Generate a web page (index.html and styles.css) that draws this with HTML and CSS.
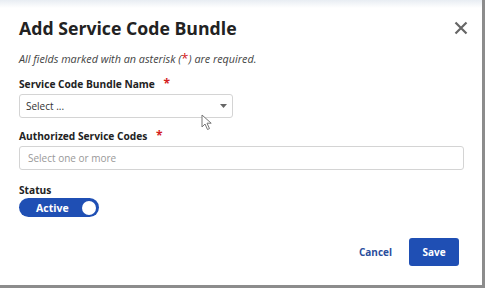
FILE: index.html
```html
<!DOCTYPE html>
<html lang="en">
<head>
    <meta charset="UTF-8">
    <meta name="viewport" content="width=device-width, initial-scale=1.0">
    <title>Add Service Code Bundle</title>
    <link rel="stylesheet" href="styles.css">
</head>
<body>
    <div class="modal">
        <div class="modal-header">
            <h1>Add Service Code Bundle</h1>
            <button class="close" aria-label="Close">
                <svg width="14" height="14" viewBox="0 0 14 14"><path d="M1.5 1.5 L12.5 12.5 M12.5 1.5 L1.5 12.5" stroke="#666" stroke-width="2.2" fill="none"/></svg>
            </button>
        </div>

        <p class="note">All fields marked with an asterisk (<span class="req">*</span>) are required.</p>

        <div class="field">
            <label>Service Code Bundle Name <span class="req">*</span></label>
            <div class="select short">
                <span>Select ...</span>
                <svg class="caret" width="7" height="4" viewBox="0 0 7 4"><path d="M0 0 H7 L3.5 4 Z" fill="#666"/></svg>
                <svg class="cursor" width="12" height="17" viewBox="0 0 12 17"><path d="M1 1 L1 13 L4 10 L6.5 15.5 L8.5 14.6 L6 9.2 L10.2 9.2 Z" fill="#fff" stroke="#777" stroke-width="1"/></svg>
            </div>
        </div>

        <div class="field">
            <label>Authorized Service Codes <span class="req">*</span></label>
            <div class="select">
                <span class="placeholder">Select one or more</span>
            </div>
        </div>

        <div class="field status">
            <label>Status</label>
            <div class="toggle">
                <span>Active</span>
                <span class="knob"></span>
            </div>
        </div>

        <div class="actions">
            <button class="link">Cancel</button>
            <button class="primary">Save</button>
        </div>
    </div>
</body>
</html>
```

FILE: styles.css
```css
body {
    margin: 0;
    background: #8c8c8c;
    font-family: "Open Sans", sans-serif;
    color: #222;
    width: 485px;
    height: 288px;
    overflow: hidden;
}

.modal {
    width: 482px;
    height: 285px;
    box-sizing: border-box;
    padding: 14px 18px 0 19px;
    background: linear-gradient(#e8edf3 0px, #fff 8px);
}

.modal-header {
    display: flex;
    justify-content: space-between;
    align-items: center;
}

h1 {
    margin: 0;
    font-size: 17.7px;
    font-weight: 700;
    color: #222;
    line-height: 28px;
}

.close {
    background: none;
    border: none;
    padding: 0;
    margin-right: -4px;
    display: flex;
}

.note {
    margin: 9px 0 11px;
    font-size: 10.8px;
    font-style: italic;
    color: #444;
}

.note .req {
    font-size: 13px;
    line-height: 10px;
    font-style: normal;
}

.req {
    color: #d32020;
}

.field {
    margin-bottom: 11px;
}

.field.status {
    padding-top: 2px;
}

.field.status label {
    margin-bottom: 0;
}

label {
    display: block;
    font-size: 10.2px;
    line-height: 15px;
    font-weight: 700;
    color: #222;
    margin-bottom: 2px;
}

label .req {
    margin-left: 6px;
    font-size: 12px;
    line-height: 10px;
}

.select {
    height: 24px;
    border: 1px solid #d4d4d4;
    border-radius: 3px;
    box-sizing: border-box;
    display: flex;
    align-items: center;
    justify-content: space-between;
    padding: 0 5px 0 6px;
    font-size: 10px;
    color: #333;
    position: relative;
}

.select.short {
    width: 214px;
}

.placeholder {
    color: #999;
    padding-left: 2px;
}

.cursor {
    position: absolute;
    left: 181px;
    top: 19px;
}

.toggle {
    width: 80px;
    height: 19px;
    border-radius: 10px;
    background: #1f4fb4;
    color: #fff;
    font-size: 10.5px;
    font-weight: 700;
    display: flex;
    align-items: center;
    justify-content: space-between;
    padding: 0 3px 0 17px;
    box-sizing: border-box;
}

.knob {
    width: 14px;
    height: 14px;
    border-radius: 50%;
    background: #fff;
}

.actions {
    display: flex;
    justify-content: flex-end;
    align-items: center;
    gap: 17px;
    margin-top: 21px;
    margin-right: 5px;
}

button {
    font-family: inherit;
    cursor: pointer;
}

.link {
    background: none;
    border: none;
    color: #2a4d9c;
    font-size: 10px;
    font-weight: 700;
    padding: 0;
}

.primary {
    background: #1f4fb4;
    color: #fff;
    border: none;
    border-radius: 3px;
    width: 50px;
    height: 28px;
    font-size: 10px;
    font-weight: 700;
}
```
